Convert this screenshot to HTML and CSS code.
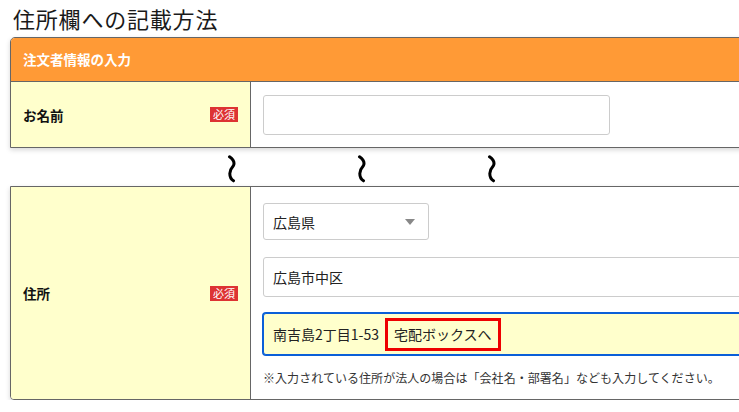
FILE: index.html
```html
<!DOCTYPE html>
<html lang="ja">
<head>
<meta charset="utf-8">
<title>住所欄への記載方法</title>
<link rel="stylesheet" href="styles.css">
</head>
<body>
<div class="page">
  <h1 class="title">住所欄への記載方法</h1>
  <div class="card card-top">
    <div class="card-head">注文者情報の入力</div>
    <div class="row row-name">
      <div class="label"><span class="label-text">お名前</span><span class="badge">必須</span></div>
      <div class="field field-name">
        <div class="input input-name"></div>
      </div>
    </div>
  </div>
  <div class="break">
    <svg class="squiggle" viewBox="0 0 10 28" width="10" height="28"><path d="M3.5 1.8 Q9.5 6 7.5 10.5 Q4 14.5 3.8 18.5 Q3.8 23.5 7.5 25.8" fill="none" stroke="#000" stroke-width="3" stroke-linecap="round"/></svg>
    <svg class="squiggle" viewBox="0 0 10 28" width="10" height="28"><path d="M3.5 1.8 Q9.5 6 7.5 10.5 Q4 14.5 3.8 18.5 Q3.8 23.5 7.5 25.8" fill="none" stroke="#000" stroke-width="3" stroke-linecap="round"/></svg>
    <svg class="squiggle" viewBox="0 0 10 28" width="10" height="28"><path d="M3.5 1.8 Q9.5 6 7.5 10.5 Q4 14.5 3.8 18.5 Q3.8 23.5 7.5 25.8" fill="none" stroke="#000" stroke-width="3" stroke-linecap="round"/></svg>
  </div>
  <div class="card card-bottom">
    <div class="row row-address">
      <div class="label"><span class="label-text">住所</span><span class="badge">必須</span></div>
      <div class="field field-address">
        <div class="input select"><span>広島県</span><span class="arrow"></span></div>
        <div class="input input-wide">広島市中区</div>
        <div class="input input-wide input-focus"><span>南吉島2丁目1-53</span><span class="mark">宅配ボックスへ</span></div>
        <p class="note">※入力されている住所が法人の場合は「会社名・部署名」なども入力してください。</p>
      </div>
    </div>
  </div>
</div>
</body>
</html>
```

FILE: styles.css
```css
html, body {
  margin: 0;
  padding: 0;
  background: #fff;
  overflow: hidden;
}
body {
  font-family: "Noto Sans CJK JP", "Noto Sans", sans-serif;
  color: #222;
}
.page {
  padding-left: 10px;
  width: 860px;
}
.title {
  margin: 0;
  padding-left: 3px;
  height: 37px;
  line-height: 36px;
  font-size: 22px;
  font-weight: 400;
  letter-spacing: 0.8px;
  color: #1a1a1a;
}
.card {
  width: 820px;
  border: 1px solid #666;
  box-shadow: 0 2px 5px rgba(0, 0, 0, 0.16);
  background: #fff;
}
.card-top {
  border-radius: 5px 5px 0 0;
  overflow: hidden;
}
.card-bottom {
  border-radius: 0 0 0 4px;
  overflow: hidden;
}
.card-head {
  height: 43px;
  line-height: 43px;
  background: #ff9a36;
  border-bottom: 1px solid #666;
  color: #fff;
  font-size: 13.5px;
  font-weight: 700;
  padding-left: 12px;
}
.row {
  display: flex;
}
.label {
  width: 215px;
  flex: none;
  background: #ffffcc;
  border-right: 1px solid #666;
  display: flex;
  align-items: center;
  justify-content: space-between;
  padding: 0 12px 0 12px;
  box-sizing: content-box;
}
.label-text {
  font-size: 13.5px;
  font-weight: 700;
  color: #111;
}
.badge {
  width: 28px;
  height: 15px;
  line-height: 15px;
  background: #dd3333;
  color: #fff;
  font-size: 11px;
  text-align: center;
}
.row-name {
  height: 65px;
}
.field {
  flex: 1;
  padding-left: 12px;
}
.field-name {
  display: flex;
  align-items: center;
}
.input {
  box-sizing: border-box;
  border: 1px solid #ccc;
  border-radius: 3px;
  background: #fff;
  height: 40px;
  padding-left: 9px;
  display: flex;
  align-items: center;
  font-size: 14px;
  color: #222;
}
.input-name {
  width: 347px;
}
.break {
  height: 38px;
  display: flex;
  align-items: center;
  padding-left: 216px;
  gap: 120px;
}
.squiggle {
  display: block;
  margin-top: 3px;
}
.row-address {
  min-height: 212px;
}
.field-address {
  padding-top: 16px;
  display: flex;
  flex-direction: column;
}
.select {
  width: 166px;
  height: 37px;
  justify-content: space-between;
  padding-right: 13px;
}
.arrow {
  width: 0;
  height: 0;
  border-left: 5.5px solid transparent;
  border-right: 5.5px solid transparent;
  border-top: 6px solid #888;
}
.input-wide {
  width: 560px;
  margin-top: 17px;
}
.input-focus {
  margin-top: 16px;
  height: 42px;
  border-color: #0a5fd8;
  box-shadow: 0 0 0 1px #0a5fd8;
  background: #ffffcc;
}
.mark {
  margin-left: 6px;
  border: 3px solid #ee0000;
  height: 33px;
  box-sizing: border-box;
  display: flex;
  align-items: center;
  padding: 0 6px 0 6px;
}
.note {
  margin: 15px 0 0 0;
  font-size: 12px;
  letter-spacing: 0.05px;
  color: #333;
  line-height: 16px;
}
```
